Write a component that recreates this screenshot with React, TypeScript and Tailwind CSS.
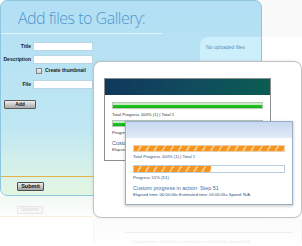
import React from 'react';

const stripes =
  'bg-[repeating-linear-gradient(120deg,#f7941f_0px,#f7941f_5px,#fcc77a_5px,#fcc77a_7px)]';

function FormRow({ label, children }: { label: string; children?: React.ReactNode }) {
  return (
    <div className="flex h-[9px] items-center">
      <span className="w-[32px] pr-[2px] text-right text-[5px] font-bold text-[#1b1b1b]">{label}</span>
      <div className="h-[9px] w-[60px] border border-[#b9d6e4] bg-white">{children}</div>
    </div>
  );
}

function GreenBar() {
  return (
    <div className="h-[7px] border border-[#b8c8b8] bg-[linear-gradient(#c6ebc6_0%,#c6ebc6_45%,#1fc41f_45%,#16b316_100%)]" />
  );
}

function BackWindow() {
  return (
    <div className="absolute left-[10px] top-[16px] h-[83px] w-[167px] border border-[#8f8f8f] bg-white">
      <div className="h-[16px] bg-gradient-to-r from-[#11385c] via-[#104a5e] to-[#0b5d52]" />
      <div className="px-[7px] pt-[7px]">
        <GreenBar />
        <p className="mt-[3px] text-[4.3px] leading-[5px] text-[#333]">Total Progress 100% (1) | Total 1</p>
        <div className="mt-[3px]">
          <GreenBar />
        </div>
        <p className="mt-[3px] text-[4.3px] leading-[5px] text-[#333]">Progress 100%</p>
        <p className="mt-[5px] text-[5.5px] leading-[7px] text-[#2d5f8f]">Custom progress</p>
        <p className="text-[4.2px] leading-[5px] text-[#444]">Elapsed time</p>
      </div>
    </div>
  );
}

function FrontWindow() {
  return (
    <div className="absolute left-[31px] top-[59px] h-[84px] w-[168px] border border-[#9aafc8] bg-white shadow-[0_1px_3px_rgba(0,0,0,0.25)]">
      <div className="h-[16px] bg-gradient-to-b from-[#c6d8ef] to-[#e2ebf7]" />
      <div className="px-[7px] pt-[7px]">
        <div className={`h-[7px] border border-[#ecd0ac] ${stripes}`} />
        <p className="mt-[2px] text-[4.3px] leading-[5px] text-[#2a4f7a]">Total Progress 100% (1) | Total 1</p>
        <div className="mt-[6px] flex h-[8px] border border-[#b9cde0] bg-white">
          <div className={`h-full ${stripes}`} style={{ width: '51%' }} />
        </div>
        <p className="mt-[2px] text-[4.3px] leading-[5px] text-[#2a4f7a]">Progress 51% (51)</p>
        <p className="mt-[5px] text-[5.5px] leading-[7px] text-[#3a6fa8]">Custom progress in action: Step 51</p>
        <p className="text-[4.2px] leading-[5px] text-[#2a4f7a]">
          Elapsed time: 00:00:06s Estimated time: 00:00:05s Speed: N/A
        </p>
      </div>
    </div>
  );
}

export default function App() {
  return (
    <div className="relative h-[246px] w-[302px] overflow-hidden bg-white font-[family-name:'Liberation_Sans',Arial,sans-serif]">
      <div className="absolute right-0 top-0 h-[37px] w-[40px] bg-[#f9f9f9]" />

      {/* gallery form panel */}
      <div className="relative flex h-[196px] w-[262px] flex-col rounded-[7px] border border-[#8ec5df] bg-gradient-to-b from-[#b2dff4] via-[#bfe7f3] via-65% to-[#e4f6e2]">
        <div className="flex h-[175px]">
          <div className="w-[161px]">
            <div className="flex h-[33px] items-center justify-center border-b border-[#e3f4fb]">
              <h1 className="pt-[2px] font-[family-name:'Open_Sans',sans-serif] text-[16px] font-light tracking-[-0.5px] text-[#4f96cf]">
                Add files to Gallery:
              </h1>
            </div>
            <div className="flex flex-col">
              <div className="mt-[8px]">
                <FormRow label="Title" />
              </div>
              <div className="mt-[4px]">
                <FormRow label="Description" />
              </div>
              <div className="mt-[4px] flex h-[6px] items-center gap-[3px] pl-[35px]">
                <span className="h-[6px] w-[6px] border border-[#858585] bg-gradient-to-b from-[#f2f2f2] to-[#cfcfcf]" />
                <span className="text-[5px] font-bold text-[#1b1b1b]">Create thumbnail</span>
              </div>
              <div className="mt-[6px]">
                <FormRow label="File" />
              </div>
              <button className="ml-[3px] mt-[11px] flex h-[9px] w-[32px] items-center justify-center rounded-[1px] border border-[#5a5a5a] bg-gradient-to-b from-[#efefef] to-[#a9a9a9] text-[5px] font-bold text-[#111]">
                Add
              </button>
            </div>
          </div>
          <div className="flex-1 pl-[38px] pt-[36px]">
            <div className="h-[120px] rounded-tl-[8px] bg-[#cdeefb] px-[6px] pt-[7px]">
              <p className="text-[5px] text-[#5c8fb8]">No uploaded files</p>
            </div>
          </div>
        </div>
        <div className="border-t border-[#e2b448] pl-[16px] pt-[5px]">
          <button className="flex h-[9px] w-[27px] items-center justify-center rounded-[1px] border border-[#4f4f4f] bg-gradient-to-b from-[#eeeeee] to-[#a3a3a3] text-[5.5px] font-bold text-[#111]">
            Submit
          </button>
        </div>
      </div>

      {/* panel reflection */}
      <div className="flex h-[26px] w-[262px] flex-col rounded-b-[7px] bg-gradient-to-b from-[#f1f9f4] to-white pl-[17px] pt-[10px]">
        <span className="flex h-[8px] w-[26px] items-center justify-center rounded-[1px] border border-[#e6e6e6] bg-[#f7f7f7] text-[5px] font-bold text-[#e2e2e2]">
          Submit
        </span>
        <span className="-ml-[17px] mt-[2px] h-px w-[93px] bg-[#f8f0dc]" />
      </div>

      {/* progress card */}
      <div className="absolute left-[93px] top-[61px] h-[157px] w-[209px] rounded-[8px] border border-[#c3c3c3] bg-white shadow-[0_0_3px_rgba(0,0,0,0.12)]">
        <BackWindow />
        <FrontWindow />
      </div>

      {/* card reflection */}
      <div className="absolute left-[93px] top-[219px] h-[27px] w-[209px] rounded-b-[8px] border-x border-[#f4f4f4] bg-gradient-to-b from-[#fbfbfb] to-white">
        <div className="ml-[31px] mt-[13px] h-px w-[168px] bg-[#f0f0f0]" />
        <p className="ml-[39px] mt-[6px] text-[4.2px] leading-[5px] text-[#ececec]">
          Elapsed time: 00:00:06s Estimated time: 00:00:05s Speed: N/A
        </p>
      </div>
    </div>
  );
}
